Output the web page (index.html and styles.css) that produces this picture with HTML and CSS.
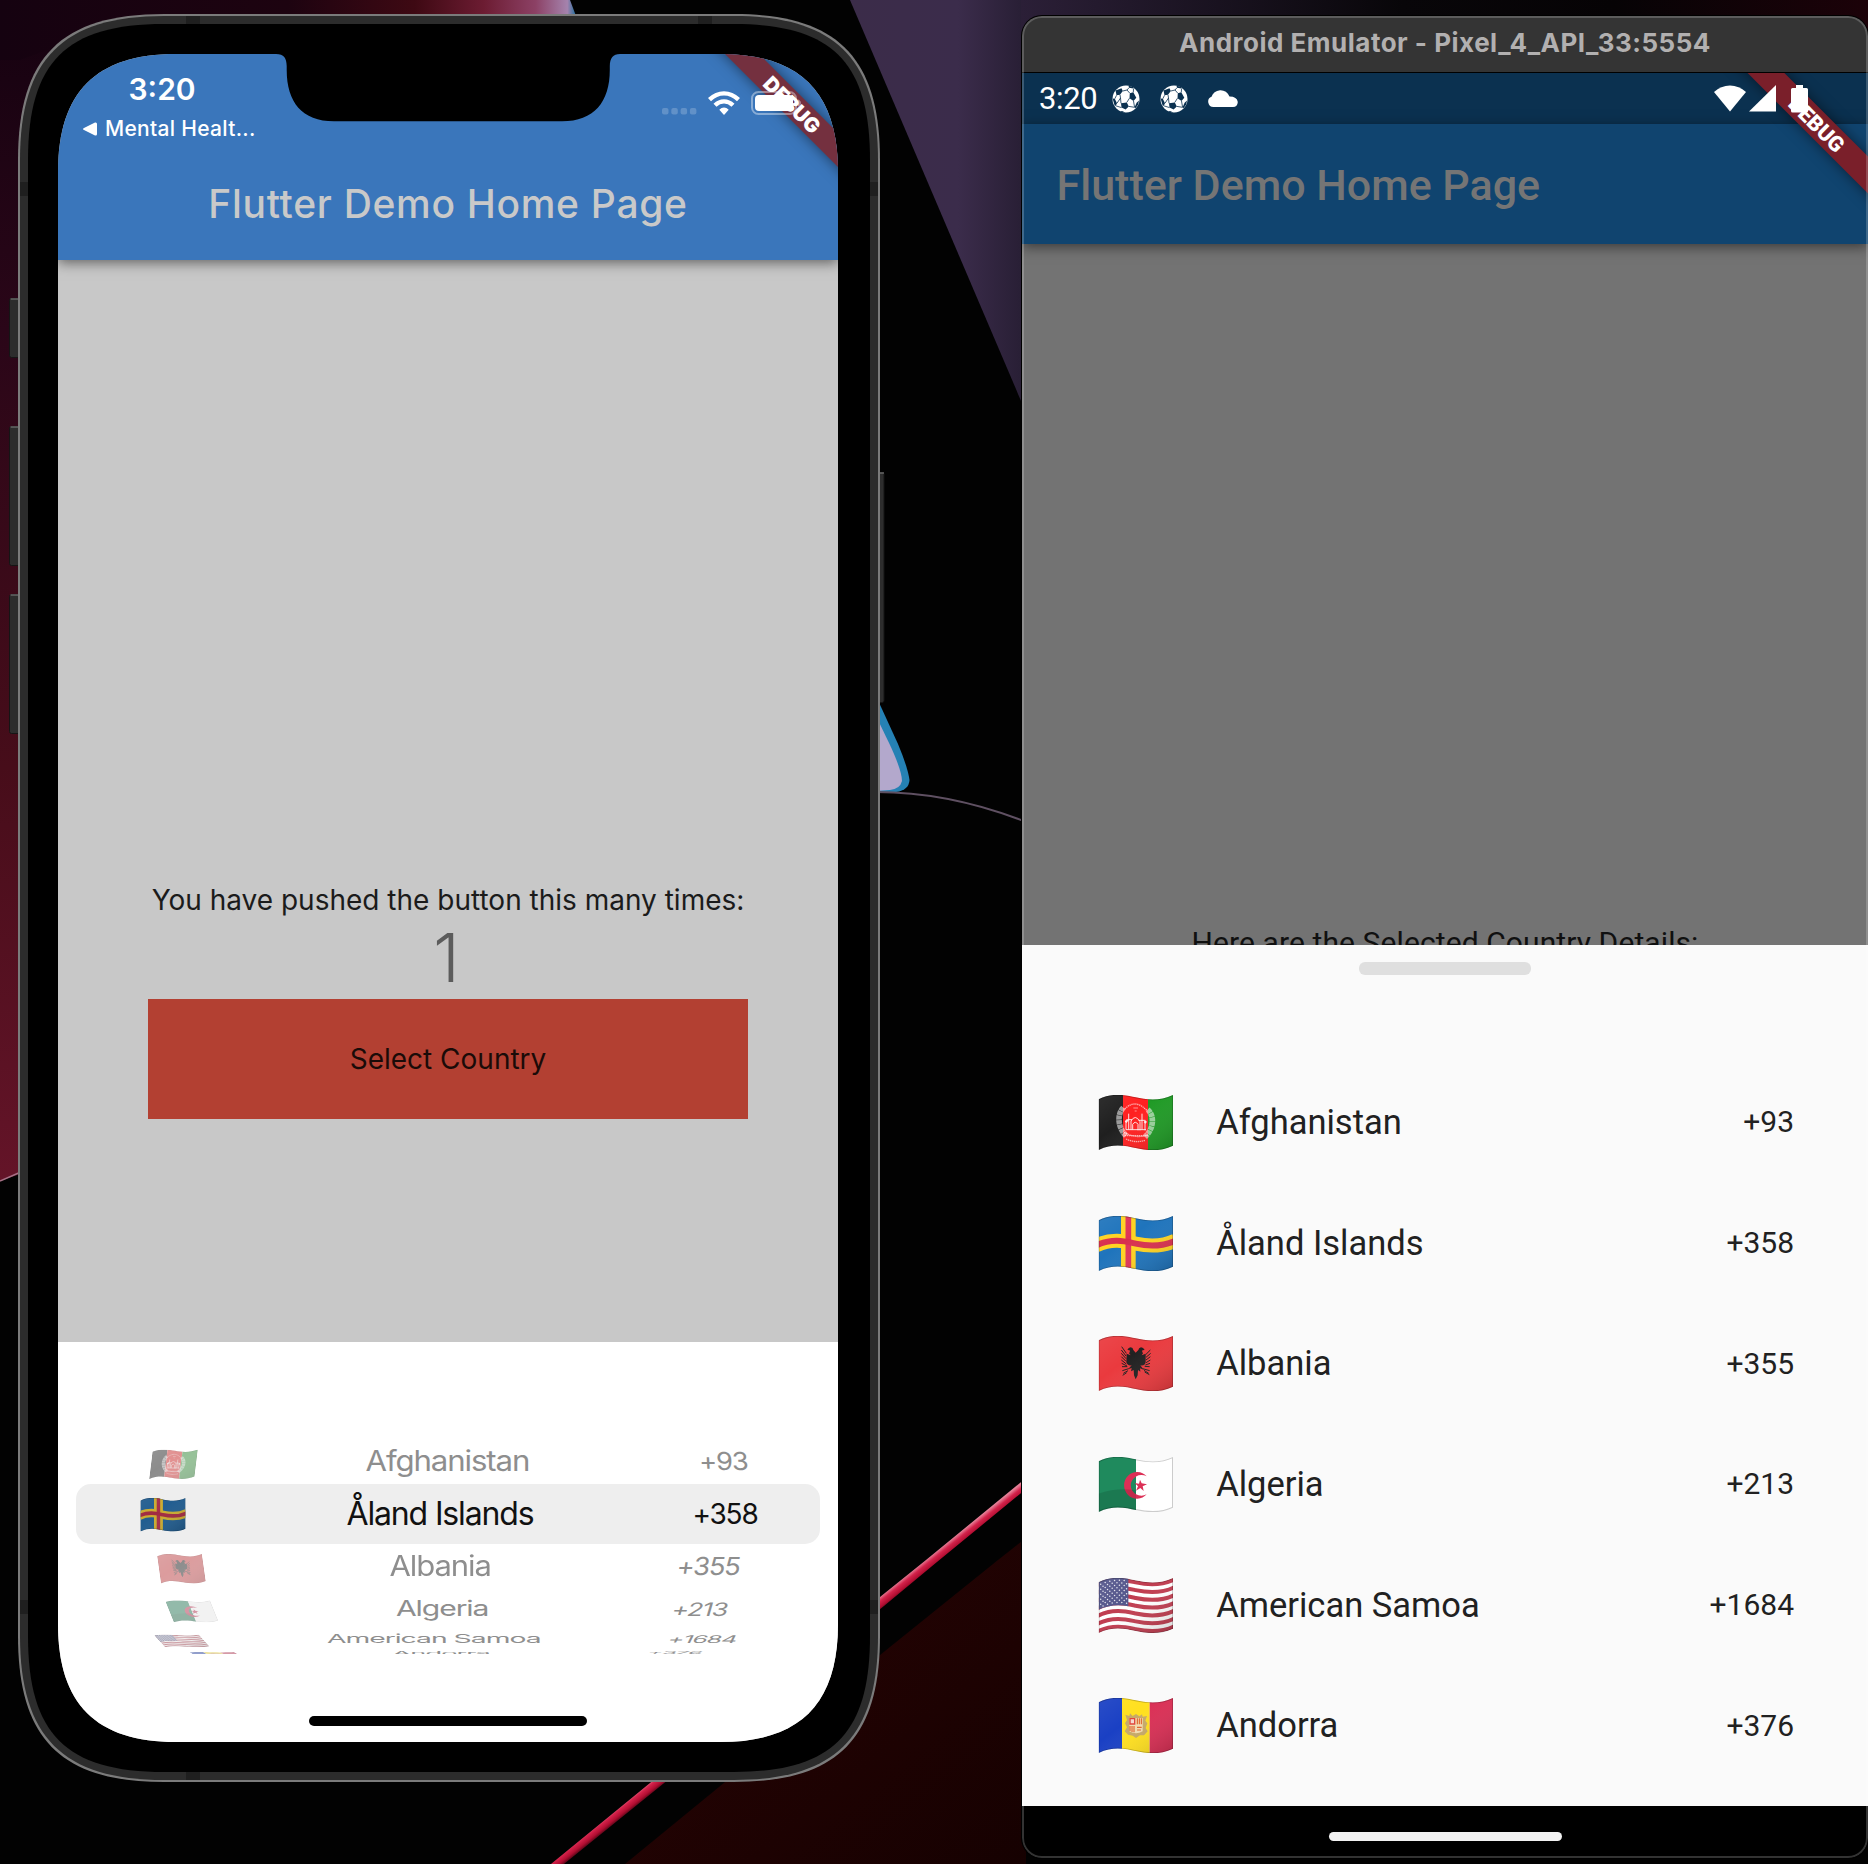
FILE: index.html
```html
<!DOCTYPE html>
<html lang="en">
<head>
<meta charset="utf-8">
<title>Country picker on iOS and Android</title>
<link rel="stylesheet" href="styles.css">
</head>
<body>
<svg class="defs" width="0" height="0" aria-hidden="true">
  <defs>
    <clipPath id="wave"><path d="M2 13C45 -9 85 1 113 7C141 13 185 20 225 0V152C185 172 141 165 113 159C85 153 45 143 2 165Z"/></clipPath>
    <linearGradient id="shade" x1="0" y1="0" x2="1" y2="1">
      <stop offset="0" stop-color="#fff" stop-opacity=".07"/><stop offset=".4" stop-color="#fff" stop-opacity="0"/><stop offset="1" stop-color="#000" stop-opacity=".18"/>
    </linearGradient>
    <symbol id="gloss" viewBox="0 0 227 168">
      <path fill="url(#shade)" stroke="#000" stroke-opacity=".22" stroke-width="5" clip-path="url(#wave)" d="M2 13C45 -9 85 1 113 7C141 13 185 20 225 0V152C185 172 141 165 113 159C85 153 45 143 2 165Z"/>
    </symbol>
    <symbol id="af" viewBox="0 0 227 168">
      <g clip-path="url(#wave)"><path fill="#1f1f1f" d="M0 0H75V168H0z"/><path fill="#ff2020" d="M75 0H150V168H75z"/><path fill="#1f9a25" d="M150 0H227V168H150z"/>
      <g fill="none" stroke="#fff" stroke-opacity=".55"><path stroke-width="17" stroke-dasharray="12 1.5" d="M76 38C57 58 58 96 84 122M149 44C170 62 168 100 141 126"/><path stroke-opacity=".65" stroke-width="4" stroke-dasharray="4 2" d="M80 42Q112 10 146 46M78 112Q112 132 150 120M84 132Q112 145 142 136M80 122H148"/></g>
      <g fill="none" stroke="#fff" stroke-opacity=".85" stroke-width="3"><path d="M84 104V76M92 104V56M99 104V78Q112 56 126 80V106M132 104V56M141 106V78M84 104H144M88 74H102M122 76H142M104 104V88Q112 76 120 88V106"/><path stroke-opacity=".5" d="M106 39H120M110 48H116"/><path stroke-width="7" d="M83 82l6-8M140 84l4-6"/></g></g>
      <use href="#gloss"/>
    </symbol>
    <symbol id="ax" viewBox="0 0 227 168">
      <g clip-path="url(#wave)"><path fill="#1f74bc" d="M0 0H227V168H0z"/><path stroke="#ffd321" stroke-width="44" d="M91 -5V175"/><path fill="none" stroke="#ffd321" stroke-width="42" d="M-5 88C45 65 85 77 113 83C141 89 185 96 232 74"/><path stroke="#df3458" stroke-width="17" d="M91 -5V175"/><path fill="none" stroke="#d82f4e" stroke-width="18" d="M-5 88C45 65 85 77 113 83C141 89 185 96 232 74"/></g>
      <use href="#gloss"/>
    </symbol>
    <symbol id="al" viewBox="0 0 227 168">
      <g clip-path="url(#wave)"><path fill="#ea3a3e" d="M0 0H227V168H0z"/></g>
      <path fill="#212121" d="M113 50L106 42Q105 35 98 34Q91 35 88 42L95 43Q97 47 93 52L98 58L86 53L85 79Q88 90 101 88L90 100L101 96L99 106L107 102L108 118L113 130L119 118L120 102L127 107L126 97L137 101L127 88Q140 91 143 79V53L131 58L135 52Q131 47 133 43L140 42Q136 35 129 34Q122 36 121 42Z"/>
      <path fill="none" stroke="#212121" stroke-width="3" d="M71 32L85 52M70 42L84 60M70 52L84 68M70 62L84 76M70 72L85 84M71 82L87 90M72 92L88 92M73 104L92 98M76 112L90 104M157 42L143 56M158 52L144 64M157 62L144 72M157 72L144 80M156 82L142 87M155 92L140 91M155 104L134 98M152 112L138 103M154 116L140 108M74 118L86 110"/>
      <use href="#gloss"/>
    </symbol>
    <symbol id="dz" viewBox="0 0 227 168">
      <g clip-path="url(#wave)"><path fill="#1f8a5d" d="M0 0H114V168H0z"/><path fill="#fff" d="M114 0H227V168H114z"/></g>
      <path fill="#dc3056" d="M146 58A39 40 0 1 0 146 112A32 31 0 1 1 146 58Z"/><path fill="#dc3056" d="M126 68L131 79L147 82L134 88L137 102L127 93L114 101L120 88L110 78L123 80Z"/>
      <path fill="none" stroke="#000" stroke-opacity=".2" stroke-width="6" clip-path="url(#wave)" d="M2 13C45 -9 85 1 113 7C141 13 185 20 225 0V152C185 172 141 165 113 159C85 153 45 143 2 165Z"/>
      <path fill="#000" fill-opacity=".12" clip-path="url(#wave)" d="M0 110Q60 90 114 100V168H0z"/>
    </symbol>
    <symbol id="us" viewBox="0 0 227 168">
      <g clip-path="url(#wave)"><path fill="#fff" d="M0 0H227V168H0z"/>
      <g fill="none" stroke="#c03d50" stroke-width="12"><path id="stripe" d="M-3 21C45 -3 85 7 113 13C141 19 185 26 230 4"/><use href="#stripe" y="23.4"/><use href="#stripe" y="46.8"/><use href="#stripe" y="70.2"/><use href="#stripe" y="93.6"/><use href="#stripe" y="117"/><use href="#stripe" y="140.4"/></g>
      <path fill="#55578c" d="M0 0H91V85C60 79 30 82 0 96Z"/>
      <g stroke="#fff" stroke-opacity=".85" stroke-width="4.5" stroke-linecap="round" stroke-dasharray="0 14.5" fill="none"><path d="M8 19Q48 0 90 10M15 25Q50 8 90 18M8 34Q48 15 90 25M15 40Q50 23 90 33M8 49Q48 30 90 40M15 55Q50 38 90 48M8 64Q48 45 90 55M15 70Q50 53 90 63M8 79Q48 60 90 70M15 84Q50 67 90 77"/></g></g>
      <use href="#gloss"/>
    </symbol>
    <symbol id="ad" viewBox="0 0 227 168">
      <g clip-path="url(#wave)"><path fill="#1a40c4" d="M0 0H72V168H0z"/><path fill="#ffe01f" d="M72 0H155V168H72z"/><path fill="#da2f55" d="M155 0H227V168H155z"/></g>
      <path fill="#c7a967" d="M82 50L94 54L96 46L104 54L114 48L124 55L132 49L134 56L147 54L142 68L148 76L143 90L149 100L138 112L126 112L114 120L104 113L90 110L80 100L87 88L81 76L87 66Z"/>
      <path fill="#f3ddb0" d="M94 60H134V100Q114 112 94 100Z"/><path fill="#e0443a" d="M94 60H112V80H94z"/><path fill="#f5d9d0" d="M98 64H108V76H98z"/><path stroke="#e0652c" stroke-width="3.5" d="M118 61V79M124 61V79M130 61V79M96 84V99M102 84V102M108 84V103M117 88H131M117 96H129"/>
      <use href="#gloss"/>
    </symbol>
    <symbol id="ball" viewBox="0 0 28 28">
      <circle cx="14" cy="14" r="13.5" fill="#fff"/>
      <path fill="#0b3150" d="M3.500 5.500L9.500 3.300L10.800 6L8 9.800L4.500 10.300ZM17.800 8.200L21.300 7.300L24.300 12.800L21.500 16L17.500 13.200ZM9 18.300L14.800 17.400L16.800 21.400L13.600 24.400L9.500 22.600ZM.6 13.500L2.800 13.800L5 18.200L3.800 20.800L2.600 20.400ZM24.600 17.800L27 15.500L26.200 19.500L23.500 23.300L22.600 22.300ZM16.500 .8L20.800 1.800L21.500 3.600L17 2.700ZM8 26L10 26L13.500 27.500L10.500 27.200Z"/>
      <path d="M10.800 6L15 5L17.800 8.200M15 5L17 2.700M21.300 7.300L21.500 3.600M8 9.800L8.500 13L5 18.200M9 18.300L8.500 13M17.500 13.200L14.800 17.400M21.500 16L22.600 22.300L16.800 21.400M3.800 20.800L9.500 22.600M4.500 10.300L2.800 13.800" fill="none" stroke="#0b3150" stroke-width=".8"/>
    </symbol>
  </defs>
</svg>

<svg class="wallpaper" viewBox="0 0 1868 1864" aria-hidden="true">
  <defs>
    <linearGradient id="wLeft" x1="0" y1="0" x2="0" y2="1"><stop offset="0" stop-color="#150210"/><stop offset=".28" stop-color="#2a0618"/><stop offset=".65" stop-color="#470d1a"/><stop offset="1" stop-color="#641428"/></linearGradient>
    <linearGradient id="wTop" x1="0" y1="0" x2="1" y2="0"><stop offset="0" stop-color="#150210"/><stop offset=".5" stop-color="#1d0310"/><stop offset=".72" stop-color="#3e0913"/><stop offset=".84" stop-color="#6c1c32"/><stop offset=".93" stop-color="#8c4165"/><stop offset=".985" stop-color="#a583ad"/><stop offset="1" stop-color="#1f6f9e"/></linearGradient>
    <linearGradient id="wPurple" x1="0" y1="0" x2="1" y2="0"><stop offset="0" stop-color="#3b2c49"/><stop offset=".6" stop-color="#3b2c4b"/><stop offset="1" stop-color="#261d32"/></linearGradient>
    <linearGradient id="wRight" x1="0" y1="0" x2="1" y2="0"><stop offset="0" stop-color="#2b1f37"/><stop offset=".45" stop-color="#080609"/><stop offset=".7" stop-color="#060305"/><stop offset="1" stop-color="#1c0209"/></linearGradient>
    <linearGradient id="wRed" x1="0" y1="0" x2="1" y2="1"><stop offset="0" stop-color="#2a0404"/><stop offset="1" stop-color="#160101"/></linearGradient>
    <linearGradient id="wEdge" gradientUnits="userSpaceOnUse" x1="738" y1="1710" x2="746" y2="1720"><stop offset="0" stop-color="#e57f96"/><stop offset=".3" stop-color="#d3224a"/><stop offset=".65" stop-color="#b10d31"/><stop offset="1" stop-color="#3a040f"/></linearGradient>
  </defs>
  <path fill="#020202" d="M0 0H1868V1864H0z"/>
  <path fill="url(#wLeft)" d="M0 0H140V1132L0 1181z"/>
  <path stroke="#a67186" stroke-width="1.5" d="M0 1181L30 1168"/>
  <path fill="url(#wTop)" d="M0 0H570L576 16H140L20 60H0z"/>
  <path fill="url(#wPurple)" d="M850 0H1030V422z"/>
  <path fill="url(#wRight)" d="M1021 0H1868V50H1021z"/>
  <path fill="#2581b4" d="M876 696L898 744Q908 768 909.500 780Q909 790 896 792L876 793z"/>
  <path fill="#b3a8cc" d="M876 716L890 745Q902 771 902 781Q900 789 890 790L876 791z"/>
  <path fill="none" stroke="#5f5062" stroke-width="2" d="M876 792Q950 792 1026 822"/>
  <path fill="url(#wRed)" d="M1026 1538L998 1560L885 1651L625 1864H1026z"/>
  <path fill="url(#wEdge)" d="M1026 1478L926 1560L880 1597L650 1783L551 1864H564L658 1788L884 1606L937 1562L1026 1489z"/>
</svg>

<main class="desktop">
  <section class="phone">
    <svg class="phone-frame" viewBox="0 0 876 1768" aria-hidden="true">
      <g fill="#2d2d2d" stroke="#151515"><rect x="0.500" y="284.500" width="14" height="59" rx="2"/><rect x="0.500" y="412.500" width="14" height="139" rx="2"/><rect x="0.500" y="580.500" width="14" height="139" rx="2"/><rect x="864" y="458.500" width="11" height="230" rx="2"/></g>
      <path stroke="#666" stroke-width="1.500" d="M1.500 285H9M1.500 413H9M1.500 581H9M870 459H875"/>
      <path fill="#7b7b7b" d="M9 146C9 43 52 0 155 0H725C828 0 871 43 871 146V1622C871 1725 828 1768 725 1768H155C52 1768 9 1725 9 1622Z"/>
      <path fill="#2c2c2c" d="M11 146C11 45 54 2 155 2H725C826 2 869 45 869 146V1622C869 1723 826 1766 725 1766H155C54 1766 11 1723 11 1622Z"/>
      <path fill="#1f1f1f" d="M177 2h14v8h-14zM689 2h14v8h-14zM177 1758h14v8h-14zM11 168h8v14h-8zM861 168h8v14h-8zM11 1586h8v14h-8zM861 1586h8v14h-8z"/>
      <path fill="#000" d="M19 146C19 48 57 10 155 10H725C823 10 861 48 861 146V1622C861 1720 823 1758 725 1758H155C57 1758 19 1720 19 1622Z"/>
    </svg>
    <div class="ios-screen">
      <header class="ios-header">
        <div class="ios-status">
          <div class="ios-left">
            <div class="ios-time">3:20</div>
            <div class="ios-back"><svg width="14" height="14" viewBox="0 0 14 14"><path fill="#fff" d="M0.500 6.200Q-.3 7 .5 7.800L12 13.500Q14 14 14 12V2Q14 0 12 .5z"/></svg><span>Mental Healt...</span></div>
          </div>
          <div class="ios-icons">
            <svg width="35" height="7" viewBox="0 0 35 7"><g fill="#fff" fill-opacity=".2"><rect width="6.500" height="6.500" rx="2"/><rect x="9.300" width="6.500" height="6.500" rx="2"/><rect x="18.600" width="6.500" height="6.500" rx="2"/><rect x="27.900" width="6.500" height="6.500" rx="2"/></g></svg>
            <svg class="ios-wifi" width="32" height="24" viewBox="0 0 32 24"><g fill="none" stroke="#fff" stroke-width="4.300"><path d="M1.500 8.600Q8 2.300 16 2.300T30.500 8.600"/><path d="M7 14.200Q11 10.300 16 10.300T25 14.200"/></g><path fill="#fff" d="M16 24L11.300 18.800Q13.500 16.600 16 16.600T20.700 18.800Z"/></svg>
            <svg width="50" height="24" viewBox="0 0 50 24"><rect x="1" y="1" width="44" height="22" rx="6.500" fill="none" stroke="#fff" stroke-opacity=".4" stroke-width="2"/><rect x="4" y="4" width="38" height="16" rx="4" fill="#fff"/><path fill="#fff" fill-opacity=".4" d="M47 8.500Q50 9.500 50 12T47 15.500z"/></svg>
          </div>
        </div>
        <h1 class="ios-title">Flutter Demo Home Page</h1>
      </header>
      <div class="ios-body">
        <p class="ios-text">You have pushed the button this many times:</p>
        <p class="ios-count">1</p>
        <button class="ios-button">Select Country</button>
      </div>
      <div class="ios-sheet">
        <div class="picker">
          <div class="pick r1"><svg class="flag"><use href="#af"/></svg><span class="name">Afghanistan</span><span class="code">+93</span></div>
          <div class="pick r2"><svg class="flag"><use href="#ax"/></svg><span class="name">Åland Islands</span><span class="code">+358</span></div>
          <div class="pick r3"><svg class="flag"><use href="#al"/></svg><span class="name">Albania</span><span class="code">+355</span></div>
          <div class="pick r4"><svg class="flag"><use href="#dz"/></svg><span class="name">Algeria</span><span class="code">+213</span></div>
          <div class="pick r5"><svg class="flag"><use href="#us"/></svg><span class="name">American Samoa</span><span class="code">+1684</span></div>
          <div class="pick r6"><svg class="flag"><use href="#ad"/></svg><span class="name">Andorra</span><span class="code">+376</span></div>
        </div>
        <div class="ios-home"></div>
      </div>
      <div class="ribbon ios-ribbon">DEBUG</div>
      <svg class="notch" width="344" height="68" viewBox="0 0 344 68"><path fill="#000" d="M0 0C8 0 10.500 4 10.700 12V16C10.700 48 26 67.300 58 67.300H286C318 67.300 333.800 48 333.800 16V12C334 4 337 0 344 0Z"/></svg>
    </div>
  </section>

  <section class="emulator">
    <div class="em-title">Android Emulator - Pixel_4_API_33:5554</div>
    <div class="em-screen">
      <div class="em-status">
        <span class="em-time">3:20</span>
        <svg width="28" height="28"><use href="#ball"/></svg>
        <svg width="28" height="28"><use href="#ball"/></svg>
        <svg class="cloud" width="30" height="18" viewBox="0 0 30 18"><path fill="#fff" d="M5.500 17A5.300 5.300 0 0 1 3.500 6.800Q5.500 1 12 .3Q18.500 0 21.500 6.500Q29 6.500 29.800 12Q29.500 17 25 17Z"/></svg>
        <svg class="em-wifi" width="32" height="27" viewBox="0 0 32 27"><path fill="#fff" d="M0 7Q7 .5 16 .5T32 7L16 26.500Z"/></svg>
        <svg class="em-signal" width="27" height="27" viewBox="0 0 27 27"><path fill="#fff" d="M27 0V26.500H0Z"/></svg>
        <svg class="em-battery" width="17" height="28" viewBox="0 0 17 28"><path fill="#fff" d="M5 0H12V3H15.500Q17 3 17 4.500V26Q17 27.500 15.500 27.500H1.500Q0 27.500 0 26V4.500Q0 3 1.500 3H5z"/></svg>
      </div>
      <h1 class="em-appbar">Flutter Demo Home Page</h1>
      <div class="em-body"><p>Here are the Selected Country Details:</p></div>
      <div class="em-sheet">
        <div class="handle"></div>
        <ul class="countries">
          <li><svg class="flag"><use href="#af"/></svg><span class="name">Afghanistan</span><span>+93</span></li>
          <li><svg class="flag"><use href="#ax"/></svg><span class="name">Åland Islands</span><span>+358</span></li>
          <li><svg class="flag"><use href="#al"/></svg><span class="name">Albania</span><span>+355</span></li>
          <li><svg class="flag"><use href="#dz"/></svg><span class="name">Algeria</span><span>+213</span></li>
          <li><svg class="flag"><use href="#us"/></svg><span class="name">American Samoa</span><span>+1684</span></li>
          <li><svg class="flag"><use href="#ad"/></svg><span class="name">Andorra</span><span>+376</span></li>
        </ul>
      </div>
      <div class="ribbon em-ribbon">DEBUG</div>
    </div>
    <div class="em-nav"><div class="em-home"></div></div>
  </section>
</main>
</body>
</html>
```
FILE: styles.css
```css
* { box-sizing: border-box; }
body { margin: 0; width: 1868px; height: 1864px; position: relative; overflow: hidden; background: #020202; }
h1, p, ul { margin: 0; padding: 0; font-weight: inherit; }
svg { display: block; flex: none; }
h1, p, span { white-space: nowrap; }
.defs, .wallpaper { position: absolute; left: 0; top: 0; }
.wallpaper { width: 1868px; height: 1864px; }
.desktop { position: absolute; inset: 0; }

/* iPhone */
.phone { position: absolute; left: 9px; top: 14px; width: 876px; height: 1768px; padding: 40px 47px 40px 49px; font-family: Inter, "Liberation Sans", sans-serif; }
.phone-frame { position: absolute; left: 0; top: 0; width: 876px; height: 1768px; }
.ios-screen { position: relative; width: 780px; height: 1688px; display: flex; flex-direction: column; background: #c8c8c8; overflow: hidden;
  clip-path: path("M0 118C0 38 38 0 118 0H662C742 0 780 38 780 118V1570C780 1650 742 1688 662 1688H118C38 1688 0 1650 0 1570Z"); }
.notch { position: absolute; left: 218px; top: 0; }
.ios-header { height: 206px; flex: none; background: #3a76bb; box-shadow: 0 3px 12px rgba(0,0,0,.5); }
.ios-status { height: 94px; display: flex; justify-content: space-between; color: #fff; }
.ios-left { padding: 17px 0 0 25px; }
.ios-time { padding-left: 45.500px; font-size: 30px; line-height: 36px; font-weight: 600; }
.ios-back { display: flex; align-items: center; gap: 8px; margin-top: 6.500px; font-size: 21px; line-height: 30px; font-weight: 500; letter-spacing: .3px; }
.ios-icons { position: relative; z-index: 2; display: flex; align-items: flex-end; gap: 11px; height: 61px; padding-right: 37px; }
.ios-title { height: 112px; padding-bottom: 2px; display: flex; align-items: center; justify-content: center; font-size: 39px; font-weight: 500; letter-spacing: .7px; color: #c9c9c9; }
.ios-body { flex: 1; display: flex; flex-direction: column; align-items: center; color: #1b1b1b; padding-top: 620px; }
.ios-text { font-size: 28px; line-height: 40px; }
.ios-count { font-size: 67px; line-height: 80px; height: 81px; font-weight: 350; color: #5c5c5c; margin-top: -2px; padding-right: 3px; }
.ios-button { width: 600px; height: 120px; border: 0; background: #b34032; font: 28px/40px Inter, sans-serif; color: #1a0b08; }
.ios-sheet { height: 400px; flex: none; background: #fff; padding: 96px 0 16px; display: flex; flex-direction: column; align-items: center; justify-content: space-between; }
.ios-home { width: 278px; height: 10px; border-radius: 5px; background: #000; }

/* Wheel picker: each row is foreshortened by its place on the cylinder */
.picker { width: 780px; height: 216px; overflow: hidden; color: #8e8e8e; font-size: 32px; }
.pick { display: grid; grid-template-columns: 240px 284px 256px; grid-template-rows: 100%; align-items: center; justify-items: center; line-height: 40px; letter-spacing: -1.150px; }
.pick .flag { width: 46px; height: 34px; opacity: .5; filter: saturate(.8) brightness(.9); transform: translate(var(--fx), var(--fy)) skewX(var(--fa)) scaleY(var(--s)); }
.pick .name { transform: translateX(var(--nx)) scale(var(--sx), var(--s)); }
.pick .code { font-size: 28px; transform: translateX(var(--cx)) skewX(var(--ca)) scale(var(--sx), var(--s)); }
.r1 { height: 46px; --s: .88; --sx: .975; --fx: -4.500px; --fy: 3.500px; --fa: -7deg; --nx: 7.500px; --cx: 13.500px; --ca: 3deg; }
.r2 { height: 60px; margin: 0 18px; grid-template-columns: 222px 284px 238px; border-radius: 15px; background: #eee; color: #111; --s: 1; --sx: 1; --fx: -24px; --fy: 1px; --fa: 0deg; --nx: 0px; --cx: 24px; --ca: 0deg; }
.pick.r2 .flag { opacity: 1; filter: saturate(.85) brightness(.82); }
.r3 { height: 43px; --s: .88; --sx: .97; --fx: 3.500px; --fy: 3px; --fa: 8deg; --nx: 0px; --cx: -2px; --ca: -8deg; }
.r4 { height: 43px; --s: .66; --sx: .94; --fx: 14px; --fy: 2.500px; --fa: 22deg; --nx: 2px; --cx: -10.500px; --ca: -16deg; }
.r5 { height: 17px; --s: .38; --sx: .885; --fx: 4px; --fy: 2px; --fa: 42deg; --nx: -6px; --cx: -8px; --ca: -26deg; }
.r6 { height: 12px; --s: .14; --sx: .85; --fx: 38px; --fy: 1.500px; --fa: 62deg; --nx: 1px; --cx: -35px; --ca: -45deg; }

.ribbon { position: absolute; z-index: 1; width: 240px; display: flex; align-items: center; justify-content: center; transform: rotate(45deg); color: #fff; font-weight: 900; box-shadow: 0 0 14px rgba(0,0,0,.5); }
.ios-ribbon { left: 612.500px; top: 36.500px; height: 24px; font-size: 20.400px; padding-left: 4px; background: #74303f; }

/* Android emulator window */
.emulator { position: absolute; left: 1022px; top: 16px; width: 846px; height: 1842px; display: flex; flex-direction: column; border-radius: 20px; overflow: hidden; background: #000; font-family: Roboto, sans-serif; box-shadow: 0 0 0 1px #000; }
.emulator::after { content: ""; position: absolute; inset: 0; border: 2px solid rgba(255,255,255,.2); border-radius: 20px; z-index: 3; }
.em-title { height: 57px; flex: none; display: flex; align-items: center; justify-content: center; padding-bottom: 2px; background: #343434; border-bottom: 1px solid #000; color: #b2b0b0; font: 700 26px/32px Inter, sans-serif; letter-spacing: .5px; }
.em-screen { position: relative; height: 1733px; flex: none; display: flex; flex-direction: column; overflow: hidden; }
.em-status { height: 51px; flex: none; display: flex; align-items: center; padding: 0 60px 0 17px; background: #0b3150; color: #fff; font-size: 31px; letter-spacing: -.4px; }
.em-time { width: 73px; }
.em-status svg { position: relative; z-index: 2; }
.em-status svg + svg { margin-left: 20px; }
.em-status .em-wifi { margin-left: auto; }
.em-status .em-signal { margin-left: 3px; }
.em-status .em-battery { margin-left: 15px; }
.em-appbar { position: relative; height: 120px; flex: none; display: flex; align-items: center; padding: 2px 0 0 34.500px; background: #10446f; color: #757575; font-size: 43px; font-weight: 500; box-shadow: 0 3px 12px rgba(0,0,0,.5); }
.em-body { height: 701px; flex: none; overflow: hidden; display: flex; justify-content: center; padding-top: 681px; background: #737373; color: #101010; font-size: 30px; line-height: 36px; letter-spacing: .100px; }
.em-sheet { flex: 1; background: #fafafa; padding-top: 17px; }
.handle { width: 172px; height: 13px; border-radius: 6px; background: #dfdfdf; margin: 0 auto; }
.countries { list-style: none; margin-top: 87.500px; }
.countries li { height: 120.700px; display: flex; align-items: center; padding: 0 74px 0 76px; font-size: 30px; color: #212121; }
.countries .flag { width: 75.700px; height: 56px; }
.countries span { position: relative; padding-bottom: 2px; }
.countries .name { flex: 1; margin-left: 42.500px; font-size: 34.500px; }
.em-ribbon { left: 674.700px; top: 37.700px; height: 26px; font-size: 21.500px; background: #7a1f2a; }
.em-nav { flex: 1; display: flex; justify-content: center; padding-top: 26px; }
.em-home { width: 233px; height: 9px; border-radius: 5px; background: #f2f2f2; }
```
